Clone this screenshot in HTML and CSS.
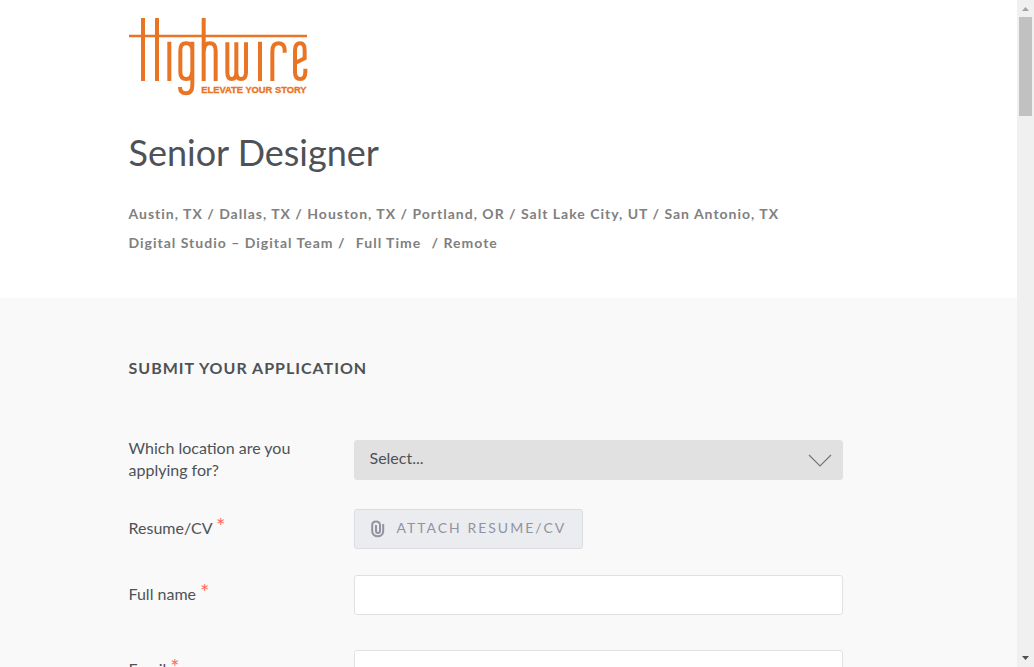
FILE: index.html
```html
<!DOCTYPE html>
<html lang="en">
<head>
<meta charset="utf-8">
<title>Highwire - Senior Designer</title>
<link rel="stylesheet" href="styles.css">
</head>
<body>
<div class="page">
  <header class="posting">
    <div class="wrap">
      <a class="logo" href="#" aria-label="Highwire">
        <svg viewBox="27 24 540 240" width="180" height="80" fill="none" stroke="#e87424">
          <path stroke-width="7" d="M27 78H561"/>
          <path stroke-width="12" d="M69 24V213M111 24V213M148 95V213M251 24V213"/>
          <path stroke-width="12" d="M217 95V226Q217 250 198 250Q180 250 180 231M216 185Q216 207 199 207Q181 207 181 187V121Q181 100 198 100Q217 100 217 121M252 122Q252 100 269 100Q287 100 287 122V213"/>
          <path stroke-width="12" d="M322 97V187Q322 207 335 207Q349 207 349 187V97M349 187Q349 207 363 207Q378 207 378 187V97M420 95V213M457 213V124Q457 100 475 100Q494 100 494 120V128"/>
          <path stroke-width="12" d="M524 160L554 145V121Q554 100 541 100Q525 100 525 121V187Q525 207 541 207Q556 207 556 185V176"/>
          <text class="logo-tagline" x="244" y="248">ELEVATE YOUR STORY</text>
        </svg>
      </a>
      <h1 class="title">Senior Designer</h1>
      <p class="meta">Austin, TX / Dallas, TX / Houston, TX / Portland, OR / Salt Lake City, UT / San Antonio, TX</p>
      <p class="meta">Digital Studio – Digital Team / <span class="commitment">Full Time</span> / Remote</p>
    </div>
  </header>
  <main class="application">
    <form class="wrap">
      <h2 class="heading">Submit your application</h2>
      <div class="row">
        <label class="label" for="location">Which location are you applying for?</label>
        <div class="field">
          <div class="select-box">
            <select class="select" id="location"><option>Select...</option></select>
            <svg class="chevron" viewBox="0 0 24 14" width="24" height="14" fill="none" stroke="#74777a" stroke-width="1.200"><path d="M1 1L12 12L23 1"/></svg>
          </div>
        </div>
      </div>
      <div class="row row-attach">
        <label class="label" for="resume">Resume/CV <span class="required">*</span></label>
        <div class="field">
          <button class="attach" id="resume" type="button">
            <svg viewBox="0 0 14 18" width="14" height="18" fill="none" stroke="#9293a2" stroke-width="2"><path d="M12.200 4V11C12.200 18 1.200 18 1.200 11V5C1.200 .3 9 .3 9 5V11C9 13.700 5 13.700 5 11V5"/></svg>
            <span>Attach Resume/CV</span>
          </button>
        </div>
      </div>
      <div class="row row-text">
        <label class="label" for="name">Full name <span class="required">*</span></label>
        <div class="field"><input class="input" id="name" type="text"></div>
      </div>
      <div class="row row-text">
        <label class="label" for="email">Email <span class="required">*</span></label>
        <div class="field"><input class="input" id="email" type="email"></div>
      </div>
    </form>
  </main>
</div>
<div class="scrollbar" aria-hidden="true">
  <svg viewBox="0 0 17 17" width="17" height="17" fill="#a3a3a3"><path d="M5 11L8.500 7L12 11Z"/></svg>
  <div class="thumb"></div>
  <svg class="scroll-down" viewBox="0 0 17 17" width="17" height="17" fill="#505050"><path d="M5 6H12L8.500 10Z"/></svg>
</div>
</body>
</html>
```
FILE: styles.css
```css
* {
  box-sizing: border-box;
}

body {
  margin: 0;
  height: 100vh;
  display: flex;
  overflow: hidden;
  background: #fff;
  color: #4e5257;
  font: 16px/22px Lato, "Open Sans", sans-serif;
}

.page {
  flex: 1;
  min-width: 0;
  display: flex;
  flex-direction: column;
  overflow: hidden;
}

.wrap {
  max-width: 760px;
  margin: 0 auto;
}

.posting {
  flex-shrink: 0;
  padding: 18px 0 41px;
}

.logo {
  display: block;
  width: 180px;
}

.logo svg {
  display: block;
}

.logo-tagline {
  font: bold 28px "Liberation Sans", Arial, sans-serif;
  fill: #e87424;
  stroke-width: 1;
}

.title {
  margin: 31px 0 24px;
  font-size: 36px;
  line-height: 46px;
  font-weight: 400;
}

.meta {
  margin: 0;
  color: #808080;
  font-size: 14px;
  line-height: 29px;
  font-weight: 700;
  letter-spacing: 1px;
}

.commitment {
  margin: 0 6px;
}

.application {
  flex: 1 0 auto;
  padding: 56px 0;
  background: #f9f9f9;
}

.heading {
  margin: 0 0 58px;
  font-size: 16px;
  line-height: 28px;
  font-weight: 700;
  letter-spacing: 1px;
  text-transform: uppercase;
}

.row {
  display: flex;
  align-items: flex-start;
}

.row-attach {
  margin-top: 28px;
}

.row-text {
  margin-top: 26px;
}

.row-text + .row-text {
  margin-top: 35px;
}

.label {
  width: 225px;
  padding: 8px 32px 0 0;
}

.row:first-of-type .label {
  padding-top: 0;
  margin-top: -3px;
}

.required {
  color: #ff6f61;
  font-size: 22px;
  line-height: 16px;
}

.field {
  flex: 1;
  max-width: 489px;
}

.select-box {
  position: relative;
}

.select,
.input {
  display: block;
  width: 100%;
  height: 40px;
  padding: 0 15px;
  border: 1px solid #e1e1e1;
  border-radius: 3px;
  background: #fff;
  color: inherit;
  font: inherit;
}

.select {
  appearance: none;
  padding-bottom: 4px;
  background: #e1e1e1;
}

.chevron {
  position: absolute;
  right: 11px;
  top: 14px;
  pointer-events: none;
}

.attach {
  display: flex;
  align-items: center;
  gap: 12px;
  height: 40px;
  padding: 0 16px 2px;
  border: 1px solid #dcdde3;
  border-radius: 3px;
  background: #ebecf0;
  color: #9293a2;
  font: 14px/20px Lato, "Open Sans", sans-serif;
  letter-spacing: 2px;
  text-transform: uppercase;
}

.attach svg {
  margin-top: 2px;
}

.scrollbar {
  width: 17px;
  flex-shrink: 0;
  display: flex;
  flex-direction: column;
  background: #f0f0f0;
}

.thumb {
  height: 99px;
  margin: 0 2px;
  background: #c1c1c1;
}

.scroll-down {
  margin-top: auto;
}
```
